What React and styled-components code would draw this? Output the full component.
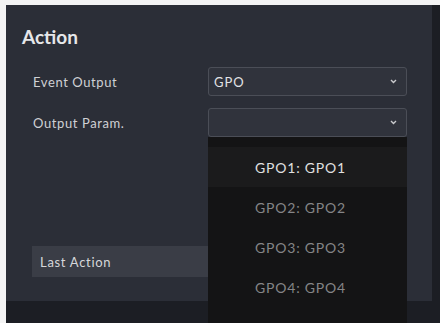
import React from "react";
import styled, { createGlobalStyle } from "styled-components";

const Global = createGlobalStyle`
  html, body { margin: 0; padding: 0; background: #f4f4f4; }
  body { font-family: Lato, "Noto Sans", sans-serif; }
`;

const Frame = styled.div`
  margin: 5px 0 0 6px;
  width: 434px;
  height: 318px;
  background: #1c1e24;
  overflow: hidden;
  position: relative;
`;

const Panel = styled.div`
  position: relative;
  width: 426px;
  height: 296px;
  background: #2b2e37;
  box-sizing: border-box;
  padding: 21px 0 0 16px;
`;

const Title = styled.div`
  font-size: 19px;
  font-weight: 700;
  color: #e6e7ea;
  line-height: 22px;
`;

const Form = styled.div`
  margin-top: 19px;
  display: flex;
  flex-direction: column;
  gap: 12px;
`;

const Row = styled.div`
  display: grid;
  grid-template-columns: 175px 199px;
  align-items: center;
  padding-left: 11px;
`;

const Label = styled.div`
  font-size: 13px;
  letter-spacing: 0.6px;
  color: #cfd0d4;
`;

const Select = styled.div`
  height: 29px;
  box-sizing: border-box;
  border: 1px solid #4b4e57;
  border-radius: 3px;
  background: #30333c;
  display: flex;
  align-items: center;
  justify-content: space-between;
  padding: 0 9px 0 5px;
  font-size: 13px;
  letter-spacing: 1px;
  color: #e2e3e6;
`;

const Chevron = () => (
  <svg width="7" height="5" viewBox="0 0 7 5">
    <path d="M1 1l2.5 2.5L6 1" fill="none" stroke="#c9cacd" strokeWidth="1.4" />
  </svg>
);

const LastAction = styled.div`
  margin: 109px 0 0 10px;
  width: 370px;
  height: 31px;
  background: #3a3d46;
  display: flex;
  align-items: center;
  padding-left: 8px;
  box-sizing: border-box;
  font-size: 13px;
  letter-spacing: 0.7px;
  color: #d6d7da;
`;

const Menu = styled.div`
  position: absolute;
  left: 202px;
  top: 132px;
  width: 199px;
  height: 200px;
  background: #141415;
  padding-top: 10px;
  box-sizing: border-box;
  display: flex;
  flex-direction: column;
`;

const Item = styled.div`
  height: 40px;
  display: flex;
  align-items: center;
  padding-left: 47px;
  font-size: 14px;
  letter-spacing: 0.8px;
  color: ${(p) => (p.$active ? "#e0e0e0" : "#858587")};
  background: ${(p) => (p.$active ? "#1b1b1c" : "transparent")};
`;

export default function App() {
  const items = ["GPO1: GPO1", "GPO2: GPO2", "GPO3: GPO3", "GPO4: GPO4"];
  return (
    <>
      <Global />
      <Frame>
        <Panel>
          <Title>Action</Title>
          <Form>
            <Row>
              <Label>Event Output</Label>
              <Select>
                <span>GPO</span>
                <Chevron />
              </Select>
            </Row>
            <Row>
              <Label>Output Param.</Label>
              <Select>
                <span />
                <Chevron />
              </Select>
            </Row>
          </Form>
          <LastAction>Last Action</LastAction>
          <Menu>
            {items.map((t, i) => (
              <Item key={t} $active={i === 0}>
                {t}
              </Item>
            ))}
          </Menu>
        </Panel>
      </Frame>
    </>
  );
}
